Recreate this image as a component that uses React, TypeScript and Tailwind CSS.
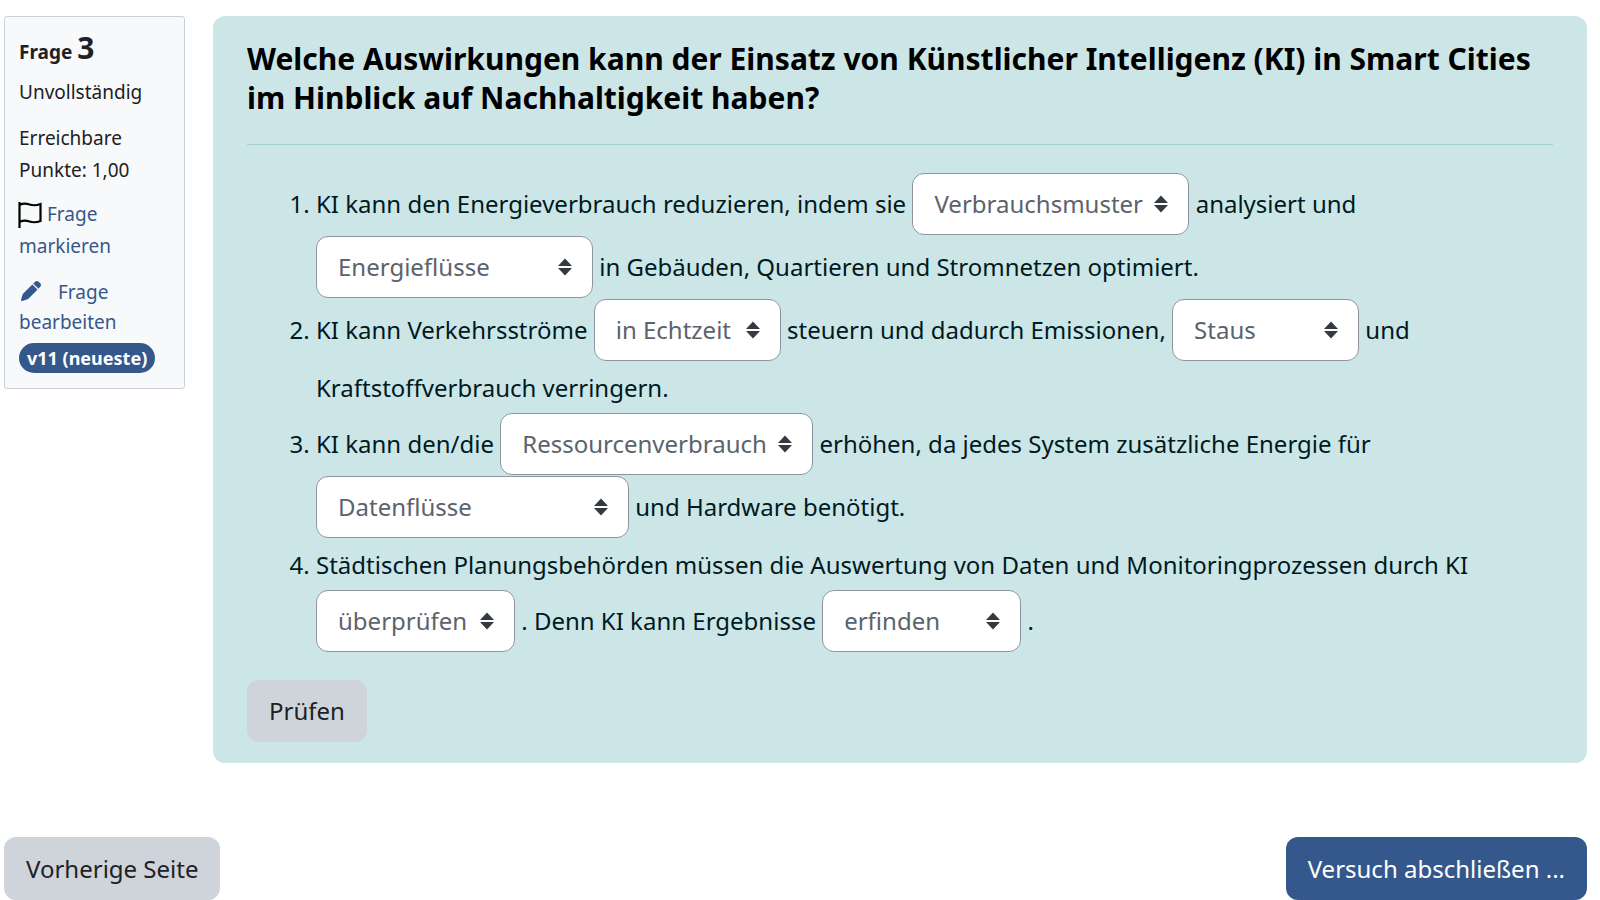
type GapProps = {
  label: string;
  options: string[];
  width: string;
};

function Gap({ label, options, width }: GapProps) {
  return (
    <span className={`relative inline-block pb-px align-baseline leading-none ${width}`}>
      <select
        aria-label={label}
        className="inline-block h-[62px] w-full appearance-none rounded-xl border border-[#8f959e] bg-white pl-[21px] pr-10 text-[24px] leading-9 text-[#5b636b]"
      >
        {options.map((o) => (
          <option key={o}>{o}</option>
        ))}
      </select>
      <svg
        viewBox="0 0 14 18"
        className="pointer-events-none absolute right-[21px] top-[22px] h-[18px] w-[14px] fill-[#343a40]"
        aria-hidden="true"
      >
        <path d="M7 0.500 14 8H0zM0 10h14l-7 7.500z" />
      </svg>
    </span>
  );
}

const patterns = ["Verbrauchsmuster", "Energieflüsse"];
const traffic = ["in Echtzeit", "Staus"];
const resources = ["Ressourcenverbrauch", "Datenflüsse"];
const checks = ["überprüfen", "erfinden"];

export default function App() {
  return (
    <div className="bg-white pl-1 pr-[13px] pt-4 font-['Noto_Sans',sans-serif] text-[24px] text-[#1d2125]">
      <div className="flex items-start gap-7">
        {/* Question info */}
        <aside className="w-[181px] shrink-0 rounded-[3px] border border-[#cad0d7] bg-[#f8f9fa] px-[14px] pb-[14px] pt-[11px] text-[19px] leading-8">
          <h3 className="font-bold leading-10">
            Frage <span className="text-[30px]">3</span>
          </h3>
          <div className="mt-1">Unvollständig</div>
          <div className="mt-[14px]">Erreichbare Punkte: 1,00</div>
          <a href="#flag" className="mt-3 block text-[#35588c]">
            <svg
              viewBox="0 0 24 26"
              className="-ml-px mr-[5px] inline-block h-[26px] w-6 align-[-7px]"
              fill="none"
              stroke="#000"
              strokeWidth="2.2"
              aria-hidden="true"
            >
              <path d="M1.500 0v26M1.500 3c4-2 7-1.500 10-.5s7 1 11-.5v17c-4 1.500-8 1.500-11 .5s-6-1.500-10 .5" />
            </svg>
            Frage markieren
          </a>
          <a href="#edit" className="mt-[15px] block leading-[30px] text-[#35588c]">
            <svg
              viewBox="0 0 512 512"
              className="ml-[2px] mr-[17px] inline-block size-5 align-[-2px]"
              fill="currentColor"
              aria-hidden="true"
            >
              <path d="M410.300 231l11.300-11.300-33.900-33.900-62.100-62.100-33.900-33.900-11.300 11.300-22.600 22.600L58.600 322.900c-10.400 10.400-18 23.300-22.200 37.400L1 480.700c-2.500 8.400-.2 17.500 6.100 23.700s15.300 8.500 23.700 6.100l120.300-35.400c14.100-4.200 27-11.800 37.400-22.200L387.700 253.700 410.300 231zM362.700 18.700L314.300 67.100l33.900 33.900 62.100 62.100 33.900 33.900 48.400-48.400c25-25 25-65.500 0-90.500L453.300 18.700c-25-25-65.500-25-90.500 0z" />
            </svg>
            Frage bearbeiten
          </a>
          <span className="mt-[6px] inline-block whitespace-nowrap rounded-full bg-[#35588c] px-2 text-[18px] font-bold leading-[30px] text-white">
            v11 (neueste)
          </span>
        </aside>

        {/* Question body */}
        <main className="min-w-0 flex-1 rounded-xl bg-[#cce6e8] px-[34px] pb-[21px] pt-[23px] text-[#001a1e]">
          <h2 className="text-[30px] font-bold leading-[39px] text-black">
            Welche Auswirkungen kann der Einsatz von Künstlicher Intelligenz (KI) in Smart Cities im
            Hinblick auf Nachhaltigkeit haben?
          </h2>
          <hr className="mb-7 mt-[27px] h-px border-0 bg-[#a3d0d3]" />
          <ol className="list-decimal pl-[69px] leading-[51px]">
            <li>
              KI kann den Energieverbrauch reduzieren, indem sie{" "}
              <Gap label="Lücke 1" options={patterns} width="w-[277px]" /> analysiert und{" "}
              <Gap label="Lücke 2" options={[...patterns].reverse()} width="w-[277px]" /> in
              Gebäuden, Quartieren und Stromnetzen optimiert.
            </li>
            <li>
              KI kann Verkehrsströme <Gap label="Lücke 3" options={traffic} width="w-[187px]" />{" "}
              steuern und dadurch Emissionen,{" "}
              <Gap label="Lücke 4" options={[...traffic].reverse()} width="w-[187px]" /> und
              Kraftstoffverbrauch verringern.
            </li>
            <li>
              KI kann den/die <Gap label="Lücke 5" options={resources} width="w-[313px]" />{" "}
              erhöhen, da jedes System zusätzliche Energie für{" "}
              <Gap label="Lücke 6" options={[...resources].reverse()} width="w-[313px]" /> und
              Hardware benötigt.
            </li>
            <li>
              Städtischen Planungsbehörden müssen die Auswertung von Daten und
              Monitoringprozessen durch KI{" "}
              <Gap label="Lücke 7" options={checks} width="w-[199px]" /> . Denn KI kann Ergebnisse{" "}
              <Gap label="Lücke 8" options={[...checks].reverse()} width="w-[199px]" /> .
            </li>
          </ol>
          <button type="button" className="mt-[27px] h-[62px] rounded-xl bg-[#ced4da] px-[22px] text-[#1d2125]">
            Prüfen
          </button>
        </main>
      </div>

      {/* Page navigation */}
      <div className="mt-[74px] flex justify-between">
        <button type="button" className="h-[63px] rounded-xl bg-[#ced4da] px-[22px]">
          Vorherige Seite
        </button>
        <button type="button" className="h-[63px] rounded-xl bg-[#35588c] px-[22px] text-white">
          Versuch abschließen ...
        </button>
      </div>
    </div>
  );
}
